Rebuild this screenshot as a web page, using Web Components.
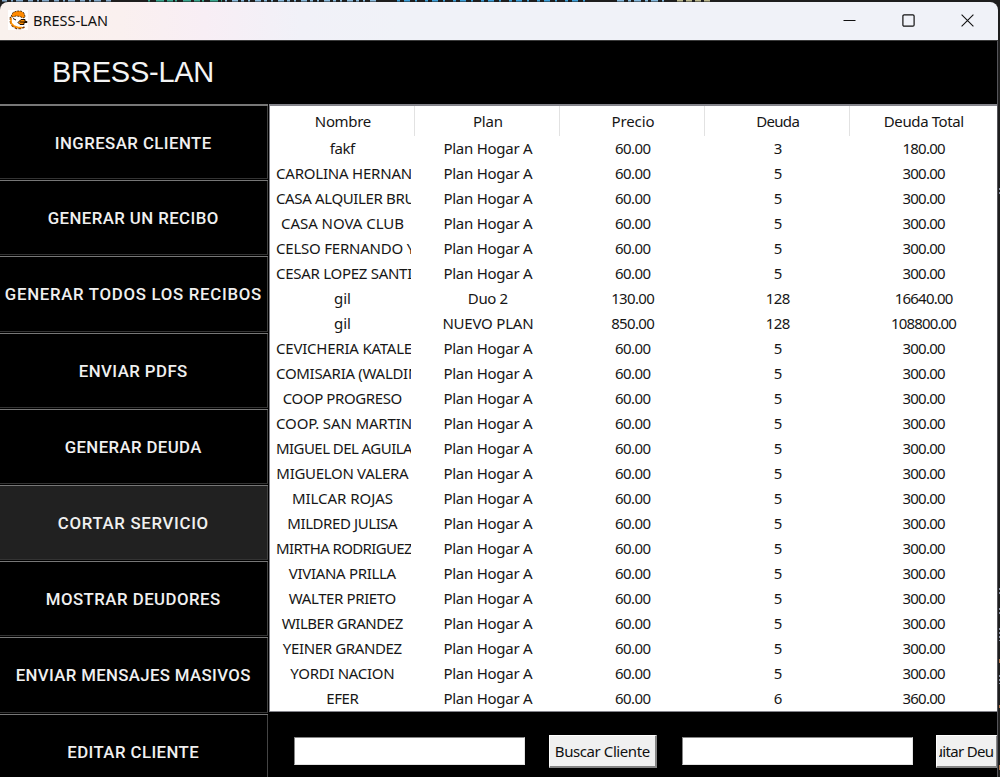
<!DOCTYPE html>
<html lang="es"><head><meta charset="utf-8"><title>BRESS-LAN</title>
<style>html,body{margin:0;height:100%;overflow:hidden;background:#1e1e1e}body{font-family:"Noto Sans","Open Sans",sans-serif}</style></head>
<body><bress-app></bress-app>
<script>
const define=(name,html,setup)=>customElements.define(name,class extends HTMLElement{
  connectedCallback(){
    if(this.shadowRoot)return;
    this.attachShadow({mode:'open'}).innerHTML=html;
    if(setup)setup(this,this.shadowRoot);
  }
});

// Text run tracked so that it occupies the width given in "w".
define('fit-text',`<style>:host{display:inline-block;white-space:pre}span{display:inline-block}</style><span><slot></slot></span>`,(el,r)=>{
  const w=+el.getAttribute('w'),s=r.querySelector('span'),n=el.textContent.length;
  if(!w)return;
  const d=(w-s.getBoundingClientRect().width)/n;
  s.style.letterSpacing=d.toFixed(3)+'px';
  s.style.marginRight=(-d).toFixed(3)+'px';
});

define('title-bar',`<style>
:host{display:flex;align-items:center;height:38px;box-sizing:border-box;padding:0 22px 0 8px;border-radius:8px 8px 0 0;
background:linear-gradient(90deg,#f9f1ed 0,#faf0ef 120px,#f8eef5 205px,#f1f1f8 300px,#f0f2f8 400px);color:#111;font-size:14.5px}
.logo{width:20px;height:20px;margin:-2px 5px 0 0}.name{flex:1;line-height:20px;margin-top:-3px}
.ctl{display:flex;gap:46px;margin:-1px 2px 0 0}.ctl svg{display:block}
</style>
<svg class="logo" viewBox="0 0 20 20"><rect width="20" height="20" fill="#fff"/>
<path d="M3 6.5 5 2.5 9 1h4l3 2 1.2 4-2.2 1-3-1.5-4-.5-3 1z" fill="#ff8a00" stroke="#2b1800" stroke-width=".8" stroke-dasharray="2 1"/>
<path d="M2.5 7v5l2 4 4 2.5h5l3-1.5" fill="none" stroke="#7a3800" stroke-width="1.6" stroke-dasharray="3 1"/>
<path d="M3 8v5l3 3 4 1.5h4" fill="none" stroke="#ff9200" stroke-width="1.6"/>
<path d="M5 8.5l3 1.5M10 12.500l3-3h4v2h2v1h-3v2h-4z" fill="#f78a00" stroke="#201000" stroke-width="1"/><path d="M12 12h6" stroke="#201000"/></svg>
<span class="name"><fit-text w="75">BRESS-LAN</fit-text></span>
<div class="ctl">
<svg width="13" height="13"><path d="M.5 6.5H12.5" stroke="#111"/></svg>
<svg width="13" height="13"><rect x=".9" y=".9" width="11.2" height="11.2" rx="1.2" fill="none" stroke="#111" stroke-width="1.2"/></svg>
<svg width="13" height="13"><path d="M.6.6 12.4 12.4M12.4.6.6 12.4" stroke="#111" stroke-width="1.1"/></svg>
</div>`);

define('app-banner',`<style>:host{display:flex;align-items:center;height:64px;box-sizing:border-box;padding-left:52px;background:#000;color:#f4f4f4;border-top:1px solid #3b3b3b;
font:29px "Liberation Sans",Arial,sans-serif}</style><fit-text w="162">BRESS-LAN</fit-text>`);

define('menu-button',`<style>
:host{display:flex;align-items:center;justify-content:center;flex:none;height:76.2px;box-sizing:border-box;border-top:1px solid #777;
color:#f0f0f0;font:500 16.8px Roboto,sans-serif;padding:0 2px 1px 0;background:#000}
:host{position:relative}
:host([active]){background:#212121}
:host(:first-child){border-top-width:2px}
:host::after{content:"";position:absolute;inset:0 0 1px 0;border-right:1px solid #444;border-bottom:1px solid #333;box-shadow:0 1px #000}
</style><fit-text><slot></slot></fit-text>`,(el,r)=>{
  const f=document.createElement('fit-text');
  f.setAttribute('w',el.getAttribute('w'));f.textContent=el.textContent;
  r.querySelector('fit-text').replaceWith(f);
});

define('side-menu',`<style>:host{display:flex;flex-direction:column;width:268px;height:673px;overflow:hidden;background:#000}</style>
<section style="display:contents"><menu-button w="157">INGRESAR CLIENTE</menu-button><menu-button w="171">GENERAR UN RECIBO</menu-button>
<menu-button w="257">GENERAR TODOS LOS RECIBOS</menu-button><menu-button w="109">ENVIAR PDFS</menu-button>
<menu-button w="137">GENERAR DEUDA</menu-button><menu-button active w="151">CORTAR SERVICIO</menu-button>
<menu-button w="175">MOSTRAR DEUDORES</menu-button><menu-button w="235">ENVIAR MENSAJES MASIVOS</menu-button>
<menu-button w="132">EDITAR CLIENTE</menu-button></section>`);

const clients=[['fakf',25],['CAROLINA HERNAN',136],['CASA ALQUILER BRU',139],['CASA NOVA CLUB',123],['CELSO FERNANDO Y',139],['CESAR LOPEZ SANTI',136],
['gil',17,'Duo 2','130.00','128','16640.00'],['gil',17,'NUEVO PLAN','850.00','128','108800.00'],['CEVICHERIA KATALE',136],['COMISARIA (WALDIN',143],
['COOP PROGRESO',119],['COOP. SAN MARTIN',136],['MIGUEL DEL AGUILA',136],['MIGUELON VALERA',132],['MILCAR ROJAS',101],['MILDRED JULISA',110],
['MIRTHA RODRIGUEZ',136],['VIVIANA PRILLA',107],['WALTER PRIETO',107],['WILBER GRANDEZ',121],['YEINER GRANDEZ',119],['YORDI NACION',104],['EFER',32]];
const widths={'Plan Hogar A':89,'Duo 2':40,'NUEVO PLAN':91,'60.00':35.5,'130.00':43,'850.00':43,'5':8,'3':8,'6':8,'128':24,
'300.00':42.500,'180.00':42.5,'360.00':42.5,'16640.00':58,'108800.00':65,Nombre:56,Plan:30,Precio:43,Deuda:43,'Deuda Total':80};
const fit=(t,w)=>`<fit-text w="${w||widths[t]}">${t}</fit-text>`;

define('client-table',`<style>
:host{display:block;box-sizing:border-box;width:729px;height:608px;border:solid #85858c;border-width:2px 1px 1px 1px;background:#fff;color:#161616;font-size:15px;overflow:hidden}
.row{display:grid;grid-template-columns:145px 145px 145px 145px 147px;height:25px;line-height:24px}
.row>div{display:flex;justify-content:center;overflow:hidden;min-width:0;padding-left:1px}
.row>.long{justify-content:flex-start;margin:0 4px 0 5px}
.row>div:first-child:not(.long){padding-left:0}
.head{height:30px;line-height:30px}
.head>div,.head>div:first-child:not(.long){border-right:1px solid #e2e2e2;box-sizing:border-box;padding-left:2px}
.head>div:last-child{border:0;padding-left:1px}
</style>`,(el,r)=>{
  const row=(cells,c='')=>`<div class="row ${c}">${cells.join('')}</div>`;
  r.innerHTML+=row(['Nombre','Plan','Precio','Deuda','Deuda Total'].map(t=>`<div>${fit(t)}</div>`),'head')+
  clients.map(([n,w,p='Plan Hogar A',pr='60.00',d=n==='fakf'?'3':n==='EFER'?'6':'5',t=n==='fakf'?'180.00':n==='EFER'?'360.00':'300.00'])=>
    row([`<div class="${w>134?'long':''}">${fit(n,w)}</div>`,...[p,pr,d,t].map(x=>`<div>${fit(x)}</div>`)])).join('');
});

define('text-entry',`<style>:host{display:block;box-sizing:border-box;flex:none;width:231px;height:28px;background:#fff;border:1px solid;border-color:#858585 #e3e3e3 #e3e3e3 #858585}</style>`);
define('tk-button',`<style>:host{display:flex;justify-content:center;align-items:center;box-sizing:border-box;flex:none;height:33px;background:#f0f0f0;border:solid;border-width:1px 2px 2px 1px;border-color:#fff #858585 #858585 #fff;padding:0 2px;color:#111;font-size:15px}
div{display:flex;justify-content:center;overflow:hidden;width:100%;line-height:28px}</style><div></div>`,(el,r)=>{
  r.querySelector('div').innerHTML=fit(el.textContent,el.getAttribute('w'));
});

define('search-bar',`<style>:host{display:flex;height:65px;box-sizing:border-box;padding:23px 0 0 25px;background:#000;overflow:hidden}
text-entry{margin-top:2px}.a{width:108px;margin:0 25px 0 24px}.b{width:62px;margin-left:23px}</style>
<text-entry></text-entry><tk-button class="a" w="95">Buscar Cliente</tk-button><text-entry></text-entry><tk-button class="b" w="87">Quitar Deuda</tk-button>`);

define('bress-app',`<style>
:host{display:block;position:relative;width:1000px;height:777px;overflow:hidden;background:#1e1e1e}
.back{display:block;height:2px}.win{width:998px}
.body{display:flex;background:#000}
.main{margin-left:1px;width:729px}
.edge{position:absolute;right:0;top:0}
</style>
<svg class="back" width="1000" height="2"><g fill="none" stroke-width="1.4">
<path d="M2 .7H112" stroke="#83a8c8" stroke-dasharray="5 4 2 3 7 5"/><path d="M148 .7H222" stroke="#39a58d" stroke-dasharray="2 6 8 3 6 2"/>
<path d="M225 .7H378" stroke="#8abadc" stroke-dasharray="2 5 6 3 3 4"/><path d="M397 .7H592" stroke="#3c9fd8" stroke-dasharray="3 4 6 5 2 8"/>
<path d="M617 .7H664" stroke="#83b8dc" stroke-dasharray="7 4 3 3"/><path d="M677 .7H711" stroke="#b9b68c" stroke-dasharray="6 3"/></g></svg>
<div class="win"><title-bar></title-bar><app-banner></app-banner>
<div class="body"><side-menu></side-menu><div class="main"><client-table></client-table><search-bar></search-bar></div></div></div>
<svg class="edge" width="3" height="777"><path d="M.5 41V777" stroke="#55555a"/><path d="M2.5 588V596M2.5 608V616M2.5 628V641M2.5 675V684M2.5 188V195" stroke="#8a91a5" stroke-dasharray="2 2"/><path d="M2.5 659V663M2.5 705V708M2.5 765V770" stroke="#b7794f"/></svg>`);
</script></body></html>
